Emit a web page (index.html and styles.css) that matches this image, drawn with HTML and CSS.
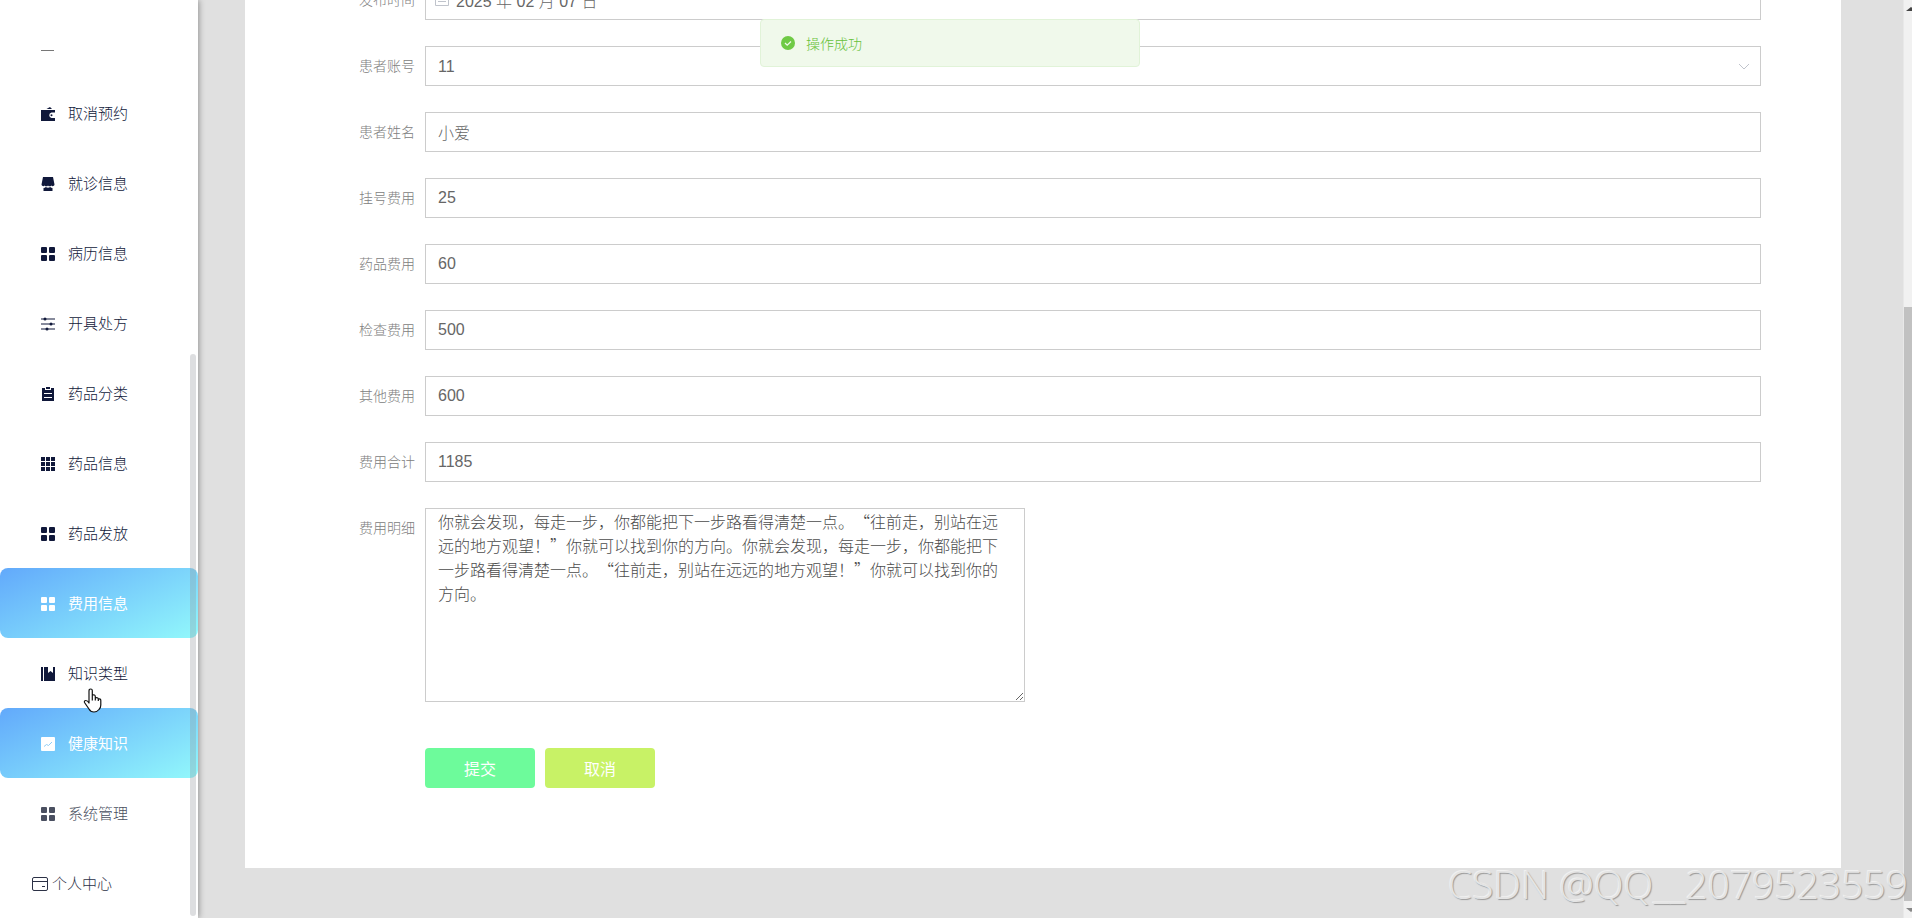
FILE: index.html
```html
<!DOCTYPE html>
<html lang="zh-CN">
<head>
<meta charset="utf-8">
<title>费用信息</title>
<link rel="stylesheet" href="styles.css">
</head>
<body>
<svg class="sprite" aria-hidden="true">
  <symbol id="i-menu" viewBox="0 0 14 14"><rect width="6" height="6" rx="1"/><rect x="8" width="6" height="6" rx="1"/><rect y="8" width="6" height="6" rx="1"/><rect x="8" y="8" width="6" height="6" rx="1"/></symbol>
</svg>
<div class="app">
  <nav class="sidebar">
    <ul class="menu">
      <li><a class="item item-clipped" href="#" aria-label="菜单"><svg class="icon" viewBox="0 0 14 14"><path d="M0 13h13v1H0z"/></svg></a></li>
      <li><a class="item" href="#"><svg class="icon" viewBox="0 0 14 14"><path fill-rule="evenodd" d="M5.500 2 9 0l2 2zM0 3h14v2.500h-3.500a2.800 2.800 0 0 0 0 5.500H14v3H0z"/><circle cx="10.500" cy="8.200" r="1"/></svg>取消预约</a></li>
      <li><a class="item" href="#"><svg class="icon" viewBox="0 0 14 14"><path d="M2 0h10l1.500 7.500a1.800 1.800 0 0 1-3.200 1 2 2 0 0 1-3.300 0 2 2 0 0 1-3.300 0 1.800 1.800 0 0 1-3.200-1zM2.500 11q1.500 0 2.300-1 2.200 1.500 4.400 0 .8 1 2.300 1v3h-9z"/></svg>就诊信息</a></li>
      <li><a class="item" href="#"><svg class="icon"><use href="#i-menu"/></svg>病历信息</a></li>
      <li><a class="item" href="#"><svg class="icon" viewBox="0 0 14 14"><path d="M0 1.500h14v1H0zM0 6.500h14v1H0zM0 11.500h14v1H0z"/><circle cx="4" cy="2" r="1.500"/><circle cx="10" cy="7" r="1.500"/><circle cx="6" cy="12" r="1.500"/></svg>开具处方</a></li>
      <li><a class="item" href="#"><svg class="icon" viewBox="0 0 14 14"><path fill-rule="evenodd" d="M1 1h3v2h6V1h3v13H1zM3 7h8V6H3zM3 11h8v-1H3z"/><path d="M5 0h4v2H5z"/></svg>药品分类</a></li>
      <li><a class="item" href="#"><svg class="icon" viewBox="0 0 14 14"><path d="M0 0h4v4H0zM5 0h4v4H5zM10 0h4v4h-4zM0 5h4v4H0zM5 5h4v4H5zM10 5h4v4h-4zM0 10h4v4H0zM5 10h4v4H5zM10 10h4v4h-4z"/></svg>药品信息</a></li>
      <li><a class="item" href="#"><svg class="icon"><use href="#i-menu"/></svg>药品发放</a></li>
      <li><a class="item item-active" href="#"><svg class="icon"><use href="#i-menu"/></svg>费用信息</a></li>
      <li><a class="item" href="#"><svg class="icon" viewBox="0 0 14 14"><path d="M0 0h2v14H0zM3 0h4v6l2.500-2L12 6V0h2v14H3z"/></svg>知识类型</a></li>
      <li><a class="item item-active" href="#"><svg class="icon" viewBox="0 0 14 14"><rect width="14" height="14" rx="1"/><path d="m3 9.500 2.500-2 2 1L11 5" fill="none" stroke="#8ecdf5"/></svg>健康知识</a></li>
      <li><a class="item item-muted" href="#"><svg class="icon"><use href="#i-menu"/></svg>系统管理</a></li>
      <li><a class="item item-top" href="#"><svg class="icon-card" viewBox="0 0 16 14" fill="none" stroke="currentColor"><rect x=".5" y=".5" width="15" height="13" rx="1.500"/><path d="M.5 4.500h15M10 9.500h3"/></svg>个人中心</a></li>
    </ul>
    <div class="side-thumb"></div>
    <svg class="pointer" viewBox="0 0 19 25"><path d="M6 15V3q0-2 1.700-2t1.600 2v7V7q2.800-.8 3 1.500V10q2.500-1 3 1 2.500-.5 2.500 1.500V17q0 3-1.800 4.500Q14 24 11 24q-3.500 0-5-3l-4.500-6.500q-.5-2 1.300-2T6 15zM9.300 10v2.500M12.300 9.500v3M15.300 11v2" fill="#fff" stroke="#111" stroke-width="1.200" stroke-linejoin="round"/></svg>
  </nav>
  <main class="main">
    <form class="card">
      <div class="row"><label for="date">发布时间</label>
        <div class="control"><svg class="calendar" viewBox="0 0 14 14" fill="none" stroke="currentColor"><path d="M.5 2.500h13v11H.5zM.5 5.500h13M4 0v3M10 0v3M3 9.500h8"/></svg><input class="field field-date" id="date" type="text" value="2025 年 02 月 07 日"></div></div>
      <div class="row"><label for="account">患者账号</label>
        <div class="control"><select class="field" id="account"><option>11</option></select><svg class="chevron" viewBox="0 0 12 8" fill="none" stroke="currentColor"><path d="m1 1 5 5 5-5"/></svg></div></div>
      <div class="row"><label for="name">患者姓名</label><div class="control"><input class="field" id="name" type="text" value="小爱"></div></div>
      <div class="row"><label for="reg">挂号费用</label><div class="control"><input class="field" id="reg" type="text" value="25"></div></div>
      <div class="row"><label for="drug">药品费用</label><div class="control"><input class="field" id="drug" type="text" value="60"></div></div>
      <div class="row"><label for="check">检查费用</label><div class="control"><input class="field" id="check" type="text" value="500"></div></div>
      <div class="row"><label for="other">其他费用</label><div class="control"><input class="field" id="other" type="text" value="600"></div></div>
      <div class="row"><label for="total">费用合计</label><div class="control"><input class="field" id="total" type="text" value="1185"></div></div>
      <div class="row"><label for="detail">费用明细</label><div class="control"><textarea class="detail" id="detail">你就会发现，每走一步，你都能把下一步路看得清楚一点。“往前走，别站在远远的地方观望！”你就可以找到你的方向。你就会发现，每走一步，你都能把下一步路看得清楚一点。“往前走，别站在远远的地方观望！”你就可以找到你的方向。</textarea></div></div>
      <div class="actions"><button class="btn btn-submit" type="button">提交</button><button class="btn btn-cancel" type="button">取消</button></div>
    </form>
  </main>
  <div class="scrollbar"><span class="arrow arrow-up"></span><span></span><span class="thumb"></span><span class="arrow arrow-down"></span></div>
  <div class="toast" role="status"><svg class="toast-icon" viewBox="0 0 14 14"><circle cx="7" cy="7" r="7" fill="#6fca45"/><path d="m4 7 2.200 2.200L10 5.500" fill="none" stroke="#f0f9eb" stroke-width="1.300"/></svg>操作成功</div>
  <div class="watermark">CSDN @QQ__2079523559</div>
</div>
</body>
</html>
```
FILE: styles.css
```css
* { box-sizing: border-box; }
body {
  margin: 0;
  font-family: "Liberation Sans", "Noto Sans CJK SC", sans-serif;
  font-weight: 300;
}
.sprite { display: none; }
.app {
  position: relative;
  display: flex;
  height: 100vh;
  overflow: hidden;
  background: #e0e0e0;
}

/* Sidebar */
.sidebar {
  position: relative;
  flex: 0 0 198px;
  background: #fff;
  box-shadow: 1px 0 6px rgba(0, 0, 0, .35);
}
.menu {
  display: flex;
  flex-direction: column;
  justify-content: flex-end;
  height: 100%;
  margin: 0;
  padding: 0;
  overflow: hidden;
  list-style: none;
}
.item {
  display: flex;
  align-items: center;
  gap: 13px;
  height: 70px;
  padding: 1px 0 0 41px;
  border-radius: 8px;
  color: #10183a;
  font-size: 15px;
  line-height: 20px;
  text-decoration: none;
}
.item-clipped { color: #777; }
.item-active {
  color: #fff;
  font-weight: 400;
  background: linear-gradient(155deg, #62a9fb, #92f8fb);
}
.item-muted { color: #4a4f60; }
.item-top { gap: 4px; padding-left: 32px; color: #2c3146; }
.icon { width: 14px; height: 14px; fill: currentColor; }
.icon-card { width: 16px; height: 14px; }
.side-thumb {
  position: absolute;
  top: 354px;
  right: 2px;
  bottom: 2px;
  width: 6px;
  border-radius: 3px;
  background: rgba(144, 147, 153, .3);
}
.pointer {
  position: absolute;
  top: 688px;
  left: 83px;
  width: 19px;
  height: 25px;
}

/* Form */
.main {
  flex: 1;
  display: flex;
  flex-direction: column;
  justify-content: flex-end;
  padding: 0 62px 50px 47px;
}
.card {
  display: flex;
  flex-direction: column;
  gap: 26px;
  padding: 80px;
  background: #fff;
}
.row { display: flex; }
.row label {
  flex: 0 0 100px;
  padding-right: 10px;
  color: #808080;
  font-size: 14px;
  line-height: 40px;
  text-align: right;
}
.control { position: relative; flex: 1; display: flex; }
.field, .detail {
  border: 1px solid #ccc;
  border-radius: 0;
  background: #fff;
  color: #666;
  font-size: 16px;
  font-weight: 300;
}
.field {
  width: 100%;
  height: 40px;
  padding: 0 12px;
  font-family: inherit;
  appearance: none;
}
.field-date { padding-left: 30px; }
.calendar, .chevron { position: absolute; color: #c0c4cc; }
.calendar { top: 12px; left: 10px; width: 14px; height: 14px; }
.chevron { top: 17px; right: 11px; width: 12px; height: 8px; }
.detail {
  width: 600px;
  height: 194px;
  padding: 0 12px;
  color: #4c4c4c;
  font-family: "Noto Sans CJK SC", sans-serif;
  line-height: 24px;
  text-spacing-trim: space-all;
}
.actions { display: flex; gap: 10px; padding: 20px 0 0 100px; }
.btn {
  width: 110px;
  height: 40px;
  padding: 0;
  border: 0;
  border-radius: 4px;
  color: #fff;
  font-family: inherit;
  font-size: 16px;
}
.btn-submit { background: #6dfb9b; }
.btn-cancel { background: #c8f266; }

/* Window scrollbar */
.scrollbar {
  flex: 0 0 9px;
  display: grid;
  grid-template-rows: 17px 290fr 594fr 17px;
  overflow: hidden;
  border-left: 1px solid #e8e8e8;
  background: #f1f1f1;
}
.thumb { background: #c1c1c1; }
.arrow { justify-self: start; align-self: center; margin-left: 2px; border: 5px solid transparent; }
.arrow-up { border-top: 0; border-bottom: 4px solid #444; }
.arrow-down { border-bottom: 0; border-top: 4px solid #888; }

/* Overlays */
.toast {
  position: absolute;
  top: 19px;
  left: 50%;
  display: flex;
  align-items: center;
  gap: 11px;
  width: 380px;
  height: 48px;
  margin-left: -196px;
  padding: 0 20px;
  border: 1px solid #e1f3d8;
  border-radius: 4px;
  background: #f0f9eb;
  color: #67c23a;
  font-size: 14px;
}
.toast-icon { width: 14px; height: 14px; }
.watermark {
  position: absolute;
  right: 4px;
  bottom: 7px;
  color: #e4e4e4;
  font-family: "Open Sans", sans-serif;
  font-size: 39px;
  font-weight: 300;
  line-height: 54px;
  white-space: nowrap;
  text-shadow: 1px 1px 1px #999, -1px -1px 0 #f0f0f0;
}
```
